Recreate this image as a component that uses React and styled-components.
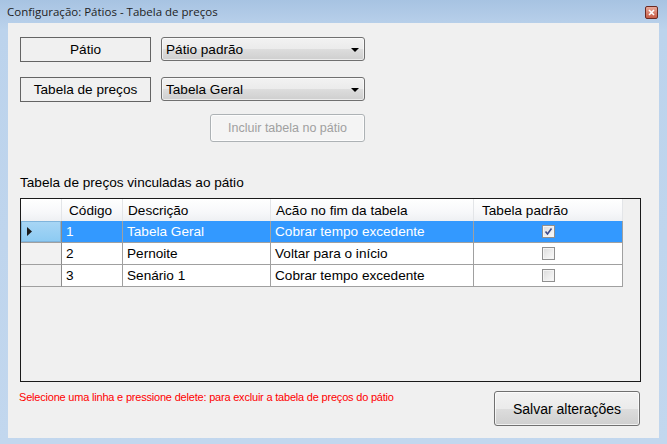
import React from 'react';
import styled, { createGlobalStyle } from 'styled-components';

const GlobalStyle = createGlobalStyle`
    html, body {
        margin: 0;
        padding: 0;
        background: #b9d1ea;
    }
`;

const uiFont = `"Liberation Sans", Arial, sans-serif`;

const Window = styled.div`
    width: 667px;
    height: 444px;
    box-sizing: border-box;
    display: flex;
    flex-direction: column;
    background: linear-gradient(to bottom, #a7c3e2 0px, #bcd3ec 30px, #c2d7ee 100%);
    padding: 0 8px 6px 8px;
    font-family: ${uiFont};
`;

const TitleBar = styled.div`
    height: 23px;
    display: flex;
    align-items: center;
    justify-content: space-between;
    font-family: "Open Sans", "Liberation Sans", sans-serif;
    font-size: 11.5px;
    color: #1e1e1e;
    margin-left: -1px;
`;

const CloseBox = styled.div`
    width: 13px;
    height: 13px;
    box-sizing: border-box;
    border: 1px solid #6b2a22;
    border-radius: 2px;
    background: linear-gradient(to bottom, #e9a99a, #c75c46);
    display: flex;
    align-items: center;
    justify-content: center;
    margin-right: 1px;
    margin-top: 1px;
`;

const Client = styled.div`
    flex: 1;
    background: #f0f0f0;
    padding: 14px 18px 0 12px;
    display: flex;
    flex-direction: column;
`;

const FieldRow = styled.div`
    display: flex;
    gap: 10px;
    margin-bottom: ${p => p.$mb || 0}px;
`;

const LabelBox = styled.div`
    width: 131px;
    height: 25px;
    box-sizing: border-box;
    border: 1px solid #646464;
    display: flex;
    align-items: center;
    justify-content: center;
    font-size: 13.6px;
    color: #000;
`;

const Combo = styled.div`
    width: 204px;
    height: 24px;
    box-sizing: border-box;
    border: 1px solid #707070;
    border-radius: 3px;
    background: linear-gradient(to bottom, #f2f2f2 0%, #ebebeb 50%, #dddddd 51%, #cfcfcf 100%);
    display: flex;
    align-items: center;
    justify-content: space-between;
    padding: 0 5px 0 4px;
    font-size: 13.6px;
    color: #000;
    box-shadow: inset 0 0 0 1px rgba(255,255,255,0.6);
`;

const Arrow = styled.span`
    width: 0;
    height: 0;
    border-left: 4px solid transparent;
    border-right: 4px solid transparent;
    border-top: 4px solid #000;
    margin-top: 2px;
`;

const ActionRow = styled.div`
    width: 345px;
    display: flex;
    justify-content: flex-end;
    margin-top: 12px;
`;

const Button = styled.button`
    width: ${p => p.$w}px;
    height: ${p => p.$h}px;
    box-sizing: border-box;
    border: 1px solid ${p => (p.disabled ? '#adb2b5' : '#707070')};
    border-radius: 3px;
    background: ${p => p.disabled
        ? '#f4f4f4'
        : 'linear-gradient(to bottom, #f2f2f2 0%, #ebebeb 50%, #dddddd 51%, #cfcfcf 100%)'};
    color: ${p => (p.disabled ? '#a0a0a0' : '#000')};
    font-family: ${uiFont};
    font-size: ${p => p.$fs || 12}px;
    padding: 0;
    box-shadow: inset 0 0 0 1px ${p => (p.disabled ? '#fcfcfc' : 'rgba(255,255,255,0.7)')};
`;

const SectionLabel = styled.div`
    font-size: 13.6px;
    color: #000;
    margin-top: 33px;
    margin-bottom: 8px;
`;

const GridBox = styled.div`
    width: 621px;
    height: 184px;
    box-sizing: border-box;
    border: 1px solid #1a1a1a;
    background: #f0f0f0;
`;

const GridTable = styled.div`
    display: grid;
    grid-template-columns: 41px 61px 148px 203px 149px;
    grid-auto-rows: 22px;
    width: 602px;
    font-size: 13.6px;
`;

const HeadCell = styled.div`
    height: 23px;
    box-sizing: border-box;
    background: linear-gradient(to bottom, #ffffff 0%, #f7f8fa 60%, #eef0f3 100%);
    border-right: 1px solid #e3e5e8;
    border-bottom: 1px solid #d5d5d5;
    display: flex;
    align-items: center;
    padding-left: ${p => p.$pl || 7}px;
    color: #000;
`;

const RowHead = styled.div`
    box-sizing: border-box;
    border-right: 1px solid #8c8c8c;
    border-bottom: 1px solid #a0a0a0;
    background: ${p => (p.$sel ? 'linear-gradient(to bottom, #a8d6f5, #8ccaf2)' : '#f2f2f2')};
    ${p => p.$sel && 'box-shadow: inset 0 0 0 1px #7fb4dc;'}
    display: flex;
    align-items: center;
    padding-left: 6px;
`;

const Cell = styled.div`
    box-sizing: border-box;
    border-right: 1px solid #a0a0a0;
    border-bottom: 1px solid #a0a0a0;
    background: ${p => (p.$sel ? '#3399ff' : '#ffffff')};
    color: ${p => (p.$sel ? '#ffffff' : '#000')};
    display: flex;
    align-items: center;
    justify-content: ${p => (p.$center ? 'center' : 'flex-start')};
    padding-left: ${p => (p.$center ? 0 : 4)}px;
    white-space: nowrap;
    overflow: hidden;
`;

const Check = styled.span`
    width: 13px;
    height: 13px;
    box-sizing: border-box;
    border: 1px solid #8f8f8f;
    background: linear-gradient(135deg, #dcdcdc, #fbfbfb);
    box-shadow: inset 0 0 0 1px #f4f4f4;
    display: flex;
    align-items: center;
    justify-content: center;
`;

const BottomRow = styled.div`
    display: flex;
    justify-content: space-between;
    align-items: flex-start;
    margin-top: 9px;
    width: 620px;
`;

const Hint = styled.div`
    color: #ff0000;
    font-size: 11px;
    letter-spacing: -0.2px;
    margin-top: 0;
    margin-left: -1px;
`;

const rows = [
    { id: 1, desc: 'Tabela Geral', action: 'Cobrar tempo excedente', def: true },
    { id: 2, desc: 'Pernoite', action: 'Voltar para o início', def: false },
    { id: 3, desc: 'Senário 1', action: 'Cobrar tempo excedente', def: false },
];

export default function App() {
    return (
        <>
            <GlobalStyle />
            <Window>
                <TitleBar>
                    <span>Configuração: Pátios - Tabela de preços</span>
                    <CloseBox>
                        <svg width="7" height="7" viewBox="0 0 7 7">
                            <path d="M1 1 L6 6 M6 1 L1 6" stroke="#fff" strokeWidth="1.6" />
                        </svg>
                    </CloseBox>
                </TitleBar>
                <Client>
                    <FieldRow $mb={15}>
                        <LabelBox>Pátio</LabelBox>
                        <Combo>Pátio padrão<Arrow /></Combo>
                    </FieldRow>
                    <FieldRow>
                        <LabelBox>Tabela de preços</LabelBox>
                        <Combo>Tabela Geral<Arrow /></Combo>
                    </FieldRow>
                    <ActionRow>
                        <Button disabled $w={155} $h={28} $fs={12.5}>Incluir tabela no pátio</Button>
                    </ActionRow>
                    <SectionLabel>Tabela de preços vinculadas ao pátio</SectionLabel>
                    <GridBox>
                        <GridTable>
                            <HeadCell />
                            <HeadCell>Código</HeadCell>
                            <HeadCell $pl={5}>Descrição</HeadCell>
                            <HeadCell $pl={5}>Acão no fim da tabela</HeadCell>
                            <HeadCell $pl={8}>Tabela padrão</HeadCell>
                            {rows.map((r, i) => {
                                const sel = i === 0;
                                return (
                                    <React.Fragment key={r.id}>
                                        <RowHead $sel={sel}>
                                            {sel && (
                                                <svg width="5" height="9" viewBox="0 0 5 9">
                                                    <path d="M0 0 L5 4.5 L0 9 Z" fill="#1a1a1a" />
                                                </svg>
                                            )}
                                        </RowHead>
                                        <Cell $sel={sel}>{r.id}</Cell>
                                        <Cell $sel={sel}>{r.desc}</Cell>
                                        <Cell $sel={sel}>{r.action}</Cell>
                                        <Cell $sel={sel} $center>
                                            <Check>
                                                {r.def && (
                                                    <svg width="9" height="9" viewBox="0 0 9 9">
                                                        <path d="M1.5 4.5 L3.5 7 L7.5 1.5" stroke="#3c4a8a" strokeWidth="1.6" fill="none" />
                                                    </svg>
                                                )}
                                            </Check>
                                        </Cell>
                                    </React.Fragment>
                                );
                            })}
                        </GridTable>
                    </GridBox>
                    <BottomRow>
                        <Hint>Selecione uma linha e pressione delete: para excluir a tabela de preços do pátio</Hint>
                        <Button $w={146} $h={35} $fs={14}>Salvar alterações</Button>
                    </BottomRow>
                </Client>
            </Window>
        </>
    );
}
